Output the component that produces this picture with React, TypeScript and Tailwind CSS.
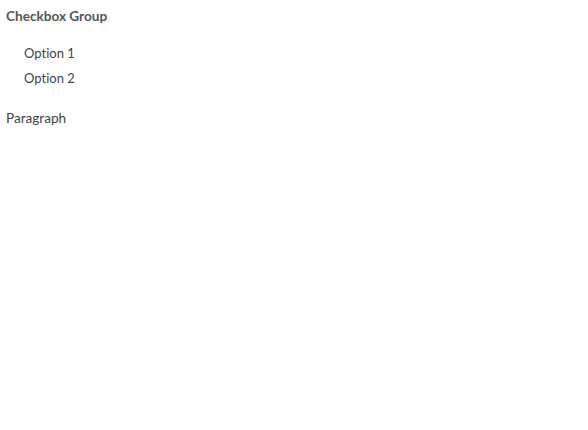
export default function App() {
  return (
    <div className="min-h-[430px] w-[588px] bg-white px-[6px] pt-[8px] font-['Lato',sans-serif] text-[13.6px] text-[#444] [font-variant-ligatures:none]">
      <div className="font-bold leading-[16px] text-[#555]">Checkbox Group</div>
      <div className="mt-[21px] flex flex-col gap-[9px] pl-[18px] text-[13px]">
        <label className="leading-[16px]">Option 1</label>
        <label className="leading-[16px]">Option 2</label>
      </div>
      <p className="mt-[24px] leading-[16px]">Paragraph</p>
    </div>
  )
}
